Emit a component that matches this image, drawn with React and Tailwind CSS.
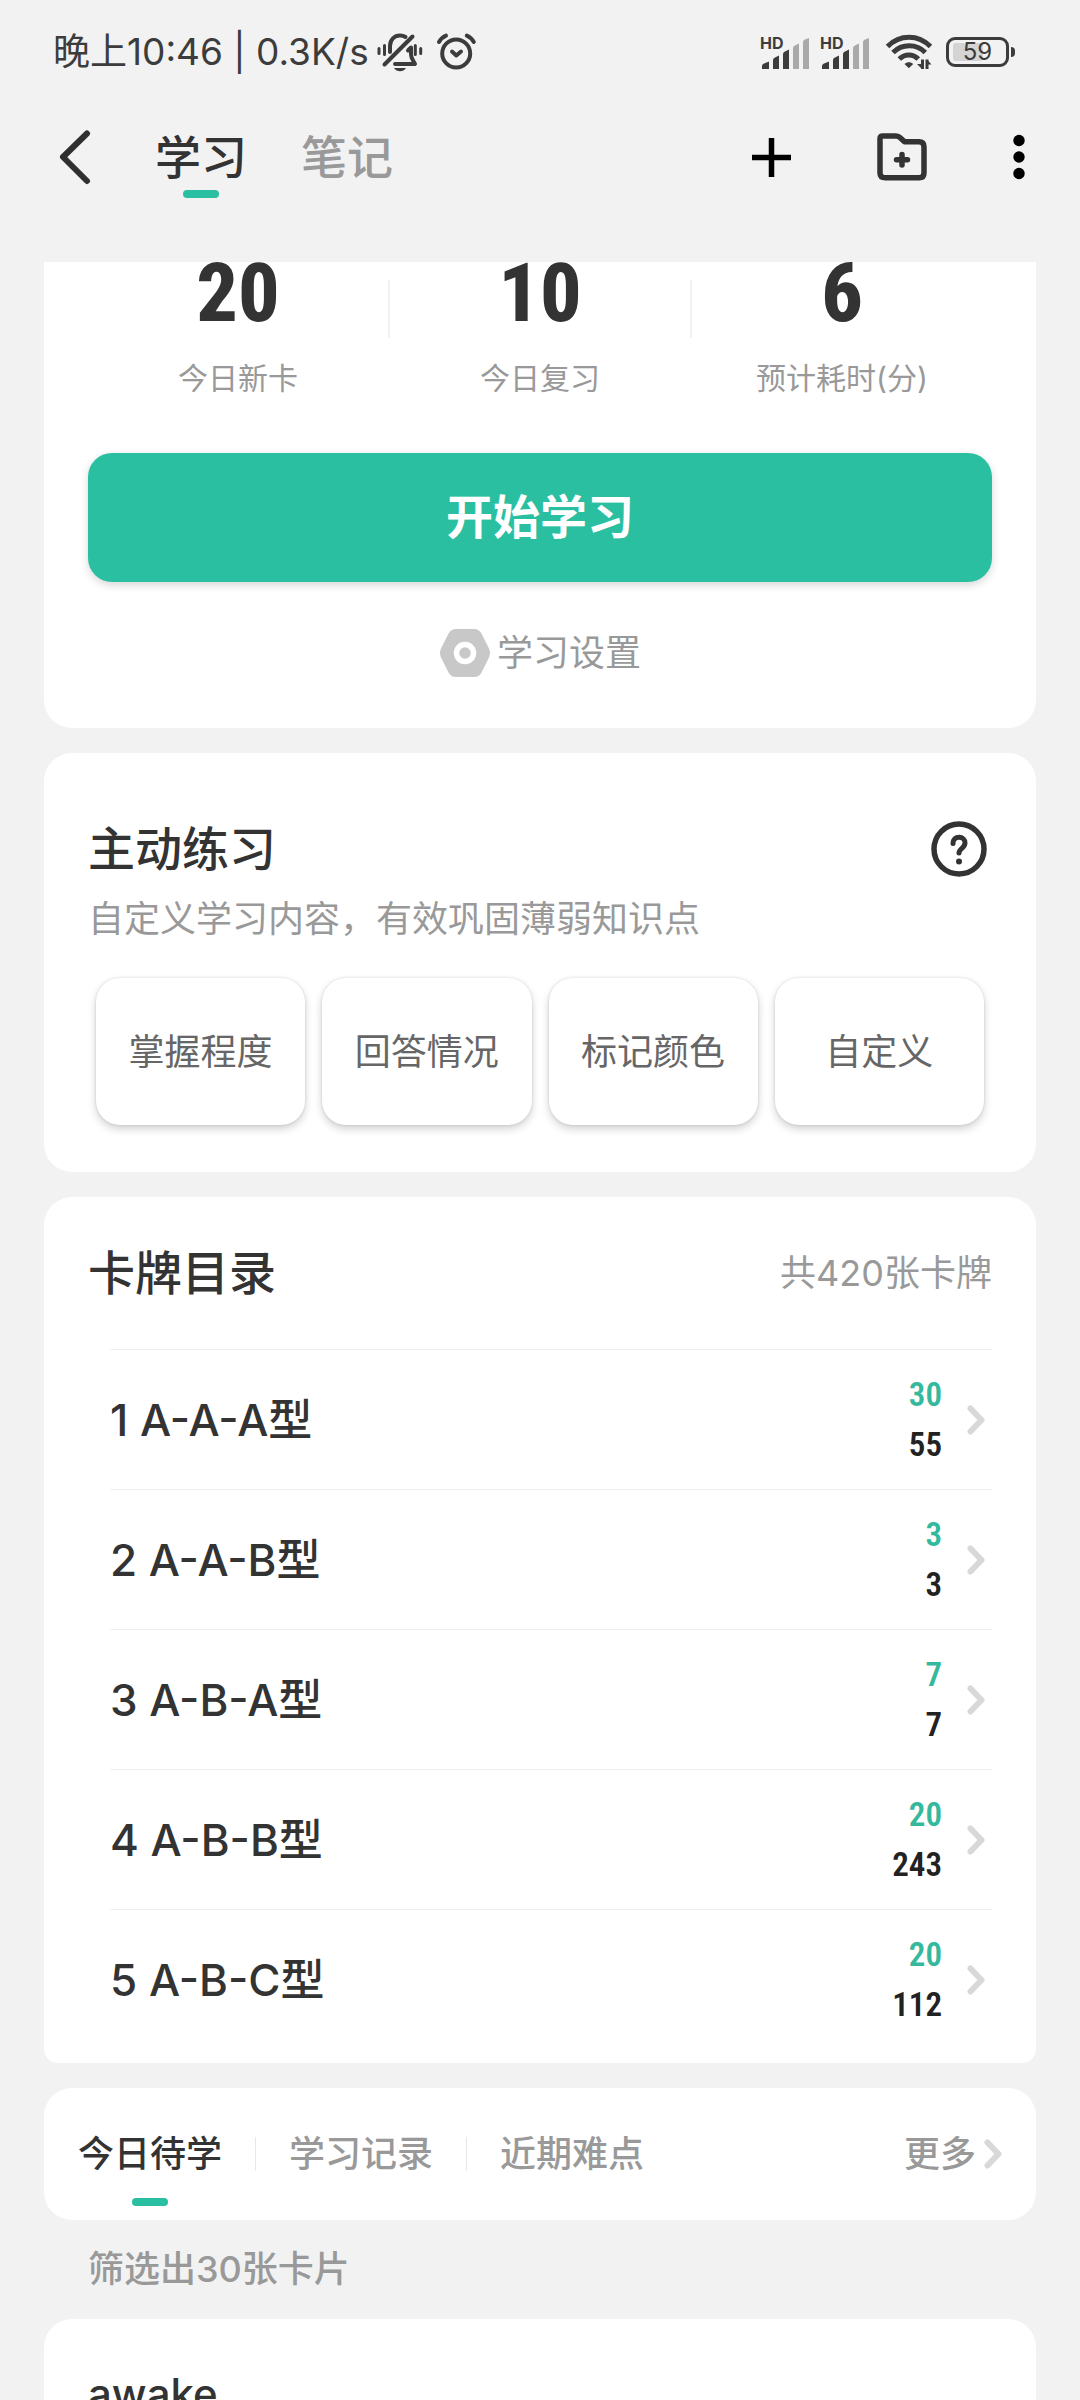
import React, { useState } from "react";

const stats = [
  { label: "今日新卡", value: 20 },
  { label: "今日复习", value: 10 },
  { label: "预计耗时(分)", value: 6 },
];

const practiceModes = ["掌握程度", "回答情况", "标记颜色", "自定义"];

const decks = [
  { id: 1, name: "1 A-A-A型", due: 30, total: 55 },
  { id: 2, name: "2 A-A-B型", due: 3, total: 3 },
  { id: 3, name: "3 A-B-A型", due: 7, total: 7 },
  { id: 4, name: "4 A-B-B型", due: 20, total: 243 },
  { id: 5, name: "5 A-B-C型", due: 20, total: 112 },
];

const recordTabs = ["今日待学", "学习记录", "近期难点"];

// ---- icons ----
const MutedBellIcon = () => (
  <svg width="46" height="42" viewBox="378 31 46 42" fill="none" stroke="#3c3c3c" strokeWidth="4" strokeLinecap="round">
    <path d="M380 48.500v5M385.500 45.500v9M416.300 45.500v9M421.700 48.500v5" strokeWidth="3" />
    <path d="M391 52v-6c0-6.500 4.500-10.500 10-10.500 2 0 4 .5 5.500 1.500" />
    <path d="M413.500 36.500 385.500 64.500" />
    <path d="M409 50.500l3-3v7c0 4 2.500 6.500 4 9.500h-20" strokeLinejoin="round" />
    <path d="M395 68h12c-1.500 2.200-3.500 3.200-6 3.200s-4.500-1-6-3.200Z" fill="#3c3c3c" stroke="none" />
  </svg>
);

const AlarmIcon = () => (
  <svg width="42" height="42" viewBox="436 31 42 42" fill="none" stroke="#3c3c3c" strokeWidth="4" strokeLinecap="round" strokeLinejoin="round">
    <circle cx="457.200" cy="53.500" r="14" />
    <path d="M440 42c1.500-2.700 4-5 7-6.300M474.800 42c-1.500-2.700-4-5-7-6.300M453 51.500l4.300 4 4.700-4" />
  </svg>
);

const SignalIcon = () => (
  <svg width="52" height="36" viewBox="0 0 52 36">
    <text x="0" y="15" fontSize="16" fontWeight="700" fill="#3c3c3c">HD</text>
    <g fill="#3c3c3c">
      <path d="M2 35V32q0-1.500 1.500-2.200L9 27.500V35Z" />
      <path d="M13 35V26q0-1.500 1.500-2.200L19 21.500V35Z" />
      <path d="M23 35V20q0-1.500 1.500-2.200L29 15.500V35Z" />
    </g>
    <g fill="#a9a9a9">
      <path d="M33 35V14q0-1.500 1.500-2.200L39 9.500V35Z" />
      <path d="M43 35V8q0-1.500 1.500-2.200L49 4V35Z" />
    </g>
  </svg>
);

const WifiIcon = () => (
  <svg width="46" height="38" viewBox="885 34 46 38" fill="none" stroke="#3c3c3c" strokeWidth="5">
    <path d="M886.500 47.500c12-12.500 31-12.500 43 0M892 53.500c9-9 23.500-9 32.300 0M898.300 60c5.500-5.500 13.700-5.500 19 0" />
    <path d="m907.800 69.300-4.300-4.300c2.500-2.300 6.200-2.300 8.700 0Z" fill="#3c3c3c" stroke="none" />
    <path d="M921.500 60.500v9.500M926 70v-9.500" strokeWidth="3" />
    <path d="M921 70l-5-5h5ZM926 60.500l4.500 5H926Z" fill="#3c3c3c" stroke="none" />
  </svg>
);

const BatteryIcon = ({ level }) => (
  <div className="flex items-center gap-[2px]">
    <div className="relative flex h-[30px] w-[63px] items-center justify-center rounded-[9px] border-[3px] border-[#3c3c3c]">
      <span className="absolute left-1 h-[18px] rounded-[3px] bg-[#d4d4d4]" style={{ width: `${level * 0.5}px` }} />
      <span className="relative text-[24px] leading-none">{level}</span>
    </div>
    <span className="h-[10px] w-1 rounded-r bg-[#3c3c3c]" />
  </div>
);

const BackIcon = () => (
  <svg width="34" height="56" viewBox="0 0 34 56" fill="none" stroke="#2f2f2f" strokeWidth="6" strokeLinecap="round" strokeLinejoin="round">
    <path d="M30 4.500 6 28l24 24" />
  </svg>
);

const PlusIcon = () => (
  <svg width="39" height="39" viewBox="0 0 39 39" stroke="#000" strokeWidth="5.500">
    <path d="M0 19.500h39M19.500 0v39" />
  </svg>
);

const FolderPlusIcon = () => (
  <svg width="50" height="48" viewBox="0 0 50 48" fill="none" stroke="#333" strokeWidth="5.500" strokeLinejoin="round" strokeLinecap="round">
    <path d="M3 5.500Q3 3 6 3h13q2.500 0 4.500 2l4 3.800H42q5 0 5 5V40q0 4.800-4.800 4.800H8.500Q3 44.800 3 40Z" />
    <path d="M25 21.500v10.500M19.500 26.800h11" />
  </svg>
);

const MoreIcon = () => (
  <svg width="12" height="46" viewBox="0 0 12 46" fill="#000">
    <circle cx="6" cy="6.500" r="5.700" />
    <circle cx="6" cy="23" r="5.700" />
    <circle cx="6" cy="39.500" r="5.700" />
  </svg>
);

const SettingsIcon = () => (
  <svg width="52" height="50" viewBox="0 0 52 50">
    <path d="M17 1h18q5 0 7.500 4.500l7.500 15q2 4.500 0 9l-7.500 15Q40 49 35 49H17q-5 0-7.500-4.500l-7.500-15q-2-4.500 0-9l7.500-15Q12 1 17 1Z" fill="#c8c8c8" />
    <circle cx="26" cy="25" r="8.500" fill="#c8c8c8" stroke="#fff" strokeWidth="5.500" />
  </svg>
);

const HelpIcon = () => (
  <svg width="56" height="56" viewBox="0 0 56 56" fill="none" stroke="#333" strokeWidth="5.500" strokeLinecap="round">
    <circle cx="28" cy="28" r="25" />
    <path d="M22 22.500c0-4 2.600-6.200 6-6.200s6 2.300 6 5.800c0 5-6 5.500-6 10" strokeWidth="5" />
    <circle cx="28" cy="40.500" r="3" fill="#333" stroke="none" />
  </svg>
);

const ChevronIcon = () => (
  <svg width="18" height="30" viewBox="0 0 18 30" fill="none" stroke="#d8d8d8" strokeWidth="6" strokeLinecap="round" strokeLinejoin="round">
    <path d="M3.500 3.500l11 11.500-11 11.500" />
  </svg>
);

// ---- sections ----
const StatusBar = () => (
  <div className="flex h-[104px] shrink-0 items-center justify-between pr-[65px] pl-[53px] text-[#3c3c3c]">
    <div className="flex items-center">
      <span className="text-[37px] leading-[50px]">晚上10:46 | 0.3K/s</span>
      <span className="ml-2 flex items-center gap-3">
        <MutedBellIcon />
        <AlarmIcon />
      </span>
    </div>
    <div className="flex items-center gap-[14px]">
      <div className="flex gap-2">
        <SignalIcon />
        <SignalIcon />
      </div>
      <WifiIcon />
      <BatteryIcon level={59} />
    </div>
  </div>
);

const TopNav = ({ page, setPage }) => (
  <header className="mb-[52px] flex h-[106px] shrink-0 items-center justify-between pr-[55px] pl-[57px]">
    <div className="flex h-full items-center">
      <button aria-label="返回" className="mr-[64px]">
        <BackIcon />
      </button>
      <nav className="flex h-full gap-[54px]">
        {["学习", "笔记"].map((name) => (
          <button
            key={name}
            onClick={() => setPage(name)}
            className={`relative h-full text-[46px] font-medium ${page === name ? "text-[#333]" : "text-[#999]"}`}
          >
            {name}
            {page === name && (
              <span className="absolute bottom-3 left-1/2 h-2 w-9 -translate-x-1/2 rounded-full bg-[#2abfa1]" />
            )}
          </button>
        ))}
      </nav>
    </div>
    <div className="flex items-center gap-[86px]">
      <button aria-label="添加"><PlusIcon /></button>
      <button aria-label="新建文件夹"><FolderPlusIcon /></button>
      <button aria-label="更多选项"><MoreIcon /></button>
    </div>
  </header>
);

const StudyCard = () => (
  <section className="-mt-10 rounded-[28px] bg-white px-11 pt-[31px] pb-12">
    <div className="flex">
      {stats.map((item, i) => (
        <React.Fragment key={item.label}>
          {i > 0 && <span className="mt-[27px] h-[58px] w-[2px] bg-[#f2f2f2]" />}
          <div className="flex-1 text-center">
            <div className="font-['Roboto_Condensed','Liberation_Sans_Narrow','Roboto',sans-serif] text-[82px] leading-[80px] font-extrabold text-[#333]">
              {item.value}
            </div>
            <div className="mt-[25px] text-[30px] leading-[40px] text-[#999]">{item.label}</div>
          </div>
        </React.Fragment>
      ))}
    </div>
    <button className="mt-[55px] h-[129px] w-full rounded-[24px] bg-[#2abfa1] text-[47px] font-bold text-white shadow-[0_3px_8px_rgba(0,0,0,0.16)]">
      开始学习
    </button>
    <button className="mx-auto mt-11 flex h-[54px] items-center gap-[6px] text-[36px] text-[#999]">
      <SettingsIcon />
      学习设置
    </button>
  </section>
);

const PracticeCard = () => (
  <section className="rounded-[28px] bg-white px-11 pt-[66px] pb-[47px]">
    <div className="flex items-center justify-between pr-[5px]">
      <h2 className="text-[47px] leading-[60px] font-medium text-[#333]">主动练习</h2>
      <button aria-label="帮助"><HelpIcon /></button>
    </div>
    <p className="mt-[15px] text-[36px] leading-[50px] text-[#999]">自定义学习内容，有效巩固薄弱知识点</p>
    <div className="mt-[34px] grid grid-cols-4 gap-[17px] px-2">
      {practiceModes.map((mode) => (
        <button
          key={mode}
          className="h-[147px] rounded-[24px] bg-white text-[36px] text-[#666] shadow-[0_4px_8px_rgba(0,0,0,0.18),0_0_3px_rgba(0,0,0,0.12)]"
        >
          {mode}
        </button>
      ))}
    </div>
  </section>
);

const DeckList = () => (
  <section className="rounded-t-[28px] rounded-b-[14px] bg-white px-11 pb-[14px]">
    <div className="flex h-[152px] items-center justify-between">
      <h2 className="text-[47px] leading-[60px] font-medium text-[#333]">卡牌目录</h2>
      <span className="text-[36px] text-[#999]">共420张卡牌</span>
    </div>
    <ul className="pl-[22px]">
      {decks.map((deck) => (
        <li key={deck.id} className="border-t border-[#f0f0f0]">
          <button className="flex h-[139px] w-full items-center pr-[7px]">
            <span className="flex-1 text-left text-[44px] font-medium text-[#333]">{deck.name}</span>
            <span className="flex flex-col text-right font-['Roboto_Condensed','Liberation_Sans_Narrow','Roboto',sans-serif] text-[33px] leading-[50px] font-semibold">
              <span className="text-[#35b99d]">{deck.due}</span>
              <span className="text-[#222]">{deck.total}</span>
            </span>
            <span className="ml-[25px]">
              <ChevronIcon />
            </span>
          </button>
        </li>
      ))}
    </ul>
  </section>
);

const RecordTabs = ({ tab, setTab }) => (
  <section className="flex h-[132px] shrink-0 items-center justify-between rounded-[28px] bg-white px-[34px]">
    <div className="flex h-full items-center gap-[33px]">
      {recordTabs.map((name, i) => (
        <React.Fragment key={name}>
          {i > 0 && <span className="h-[34px] w-px bg-[#e8e8e8]" />}
          <button
            onClick={() => setTab(name)}
            className={`relative h-full text-[36px] font-medium ${tab === name ? "text-[#333]" : "text-[#999]"}`}
          >
            {name}
            {tab === name && (
              <span className="absolute bottom-[14px] left-1/2 h-2 w-9 -translate-x-1/2 rounded-full bg-[#2abfa1]" />
            )}
          </button>
        </React.Fragment>
      ))}
    </div>
    <button className="flex items-center gap-2 text-[36px] font-medium text-[#999]">
      更多
      <ChevronIcon />
    </button>
  </section>
);

export default function App() {
  const [page, setPage] = useState("学习");
  const [tab, setTab] = useState("今日待学");

  return (
    <div className="flex h-screen flex-col overflow-hidden bg-[#f2f2f2] font-['Inter','Noto_Sans_CJK_SC',sans-serif]">
      <StatusBar />
      <TopNav page={page} setPage={setPage} />
      <main className="min-h-0 flex-1 overflow-hidden px-11">
        <div className="flex flex-col gap-[25px]">
          <StudyCard />
          <PracticeCard />
          <DeckList />
          <RecordTabs tab={tab} setTab={setTab} />
          <p className="px-11 text-[36px] leading-[49px] font-medium text-[#999]">筛选出30张卡片</p>
          <article className="rounded-[28px] bg-white px-11 py-[45px]">
            <h3 className="text-[42px] leading-[60px] font-medium text-[#333]">awake</h3>
          </article>
        </div>
      </main>
    </div>
  );
}
